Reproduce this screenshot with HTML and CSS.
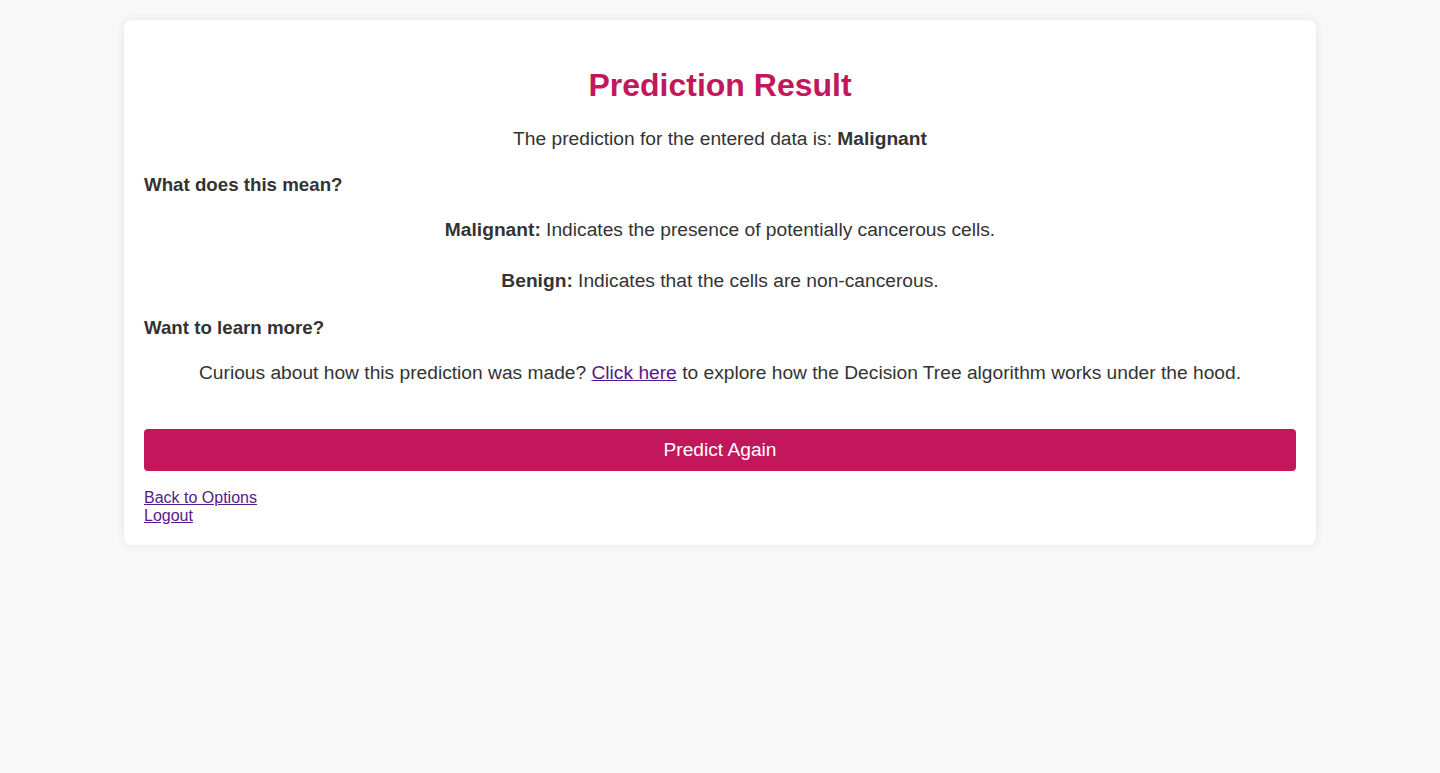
FILE: index.html
```html
<!DOCTYPE html>
<html lang="en">
<head>
<meta charset="utf-8">
<title>Prediction Result</title>
<link rel="stylesheet" href="styles.css">
</head>
<body>
<div class="container">
  <h1 class="title">Prediction Result</h1>
  <p class="result">The prediction for the entered data is: <strong>Malignant</strong></p>
  <h3 class="section">What does this mean?</h3>
  <p class="info info-malignant"><strong>Malignant:</strong> Indicates the presence of potentially cancerous cells.</p>
  <p class="info info-benign"><strong>Benign:</strong> Indicates that the cells are non-cancerous.</p>
  <h3 class="section section-more">Want to learn more?</h3>
  <p class="info info-more">Curious about how this prediction was made? <a href="#">Click here</a> to explore how the Decision Tree algorithm works under the hood.</p>
  <button class="btn">Predict Again</button>
  <div class="links">
    <a href="#">Back to Options</a><br>
    <a href="#">Logout</a>
  </div>
</div>
</body>
</html>
```

FILE: styles.css
```css
html, body {
  margin: 0;
  padding: 0;
}
body {
  background: #f8f8f8;
  font-family: "Liberation Sans", Arial, sans-serif;
  color: #333;
  padding: 20px 0;
}
.container {
  max-width: 1152px;
  margin: 0 auto;
  background: #fff;
  padding: 20px 20px 20px;
  border-radius: 8px;
  box-shadow: 0 0 10px rgba(0, 0, 0, 0.08);
}
.title {
  color: #c2185b;
  font-size: 32px;
  line-height: 37px;
  text-align: center;
  margin: 27px 0 24px;
}
.result {
  text-align: center;
  font-size: 19.2px;
  line-height: 22px;
  margin: 0 0 24px;
}
.section {
  font-size: 18.72px;
  line-height: 22px;
  margin: 0 0 23px;
}
.info {
  text-align: center;
  font-size: 19.2px;
  line-height: 22px;
  margin: 0;
}
.info-malignant {
  margin-bottom: 29px;
}
.info-benign {
  margin-bottom: 25px;
}
.info-more {
  margin-bottom: 45px;
}
a {
  color: #551a8b;
}
.btn {
  display: block;
  width: 100%;
  margin: 0;
  height: 42px;
  padding: 0;
  background: #c2185b;
  color: #fff;
  border: none;
  border-radius: 4px;
  font-family: "Liberation Sans", Arial, sans-serif;
  font-size: 19.2px;
}
.links {
  margin-top: 18px;
  font-size: 16px;
  line-height: 18px;
}
```
